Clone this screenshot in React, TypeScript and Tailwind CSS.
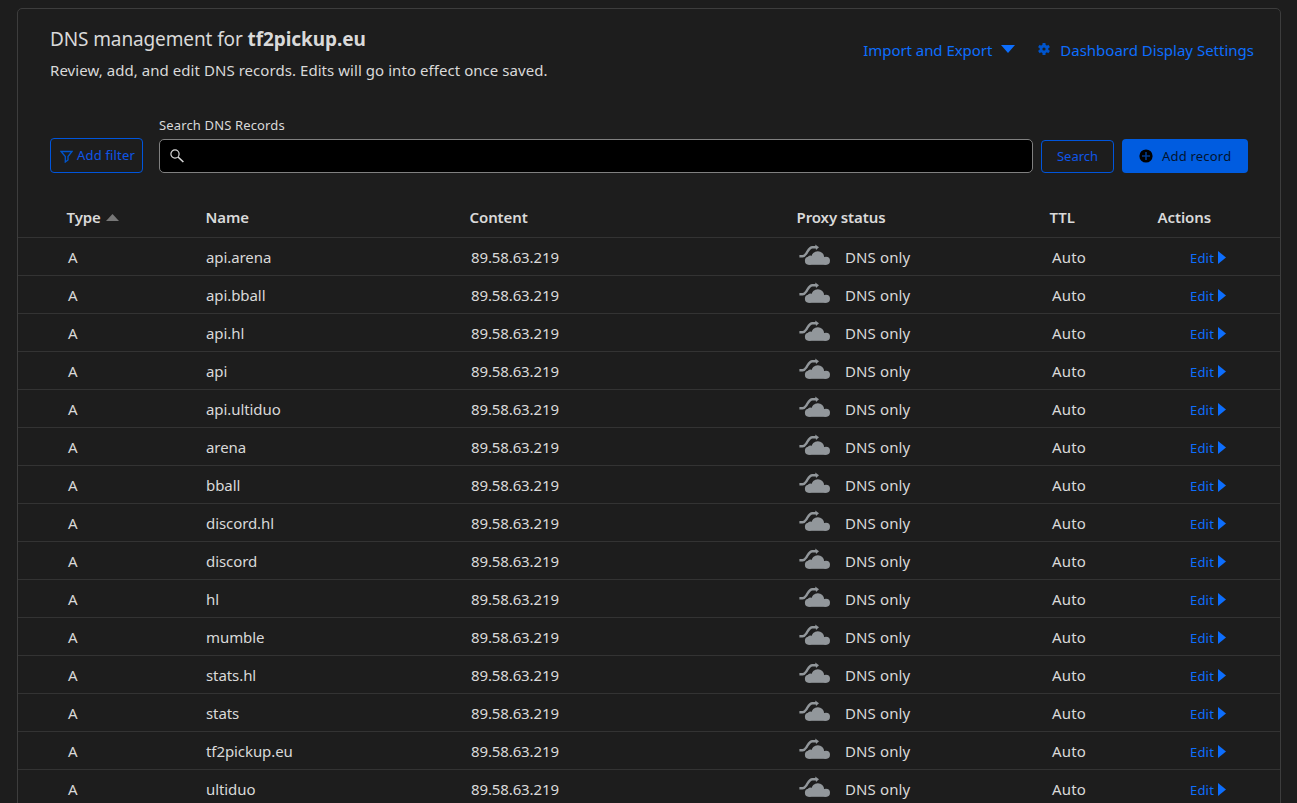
const records: string[] = [
  'api.arena',
  'api.bball',
  'api.hl',
  'api',
  'api.ultiduo',
  'arena',
  'bball',
  'discord.hl',
  'discord',
  'hl',
  'mumble',
  'stats.hl',
  'stats',
  'tf2pickup.eu',
  'ultiduo',
];

function GearIcon() {
  return (
    <svg width="12" height="12" viewBox="0 0 12 12" className="shrink-0">
      <g fill="#0055cc">
        {[0, 60, 120].map((a) => (
          <rect key={a} x="4.5" y="0" width="3" height="12" rx="0.5" transform={`rotate(${a} 6 6)`} />
        ))}
        <circle cx="6" cy="6" r="4.4" />
      </g>
      <circle cx="6" cy="6" r="1.6" fill="#1d1d1d" />
    </svg>
  );
}

function CloudIcon() {
  return (
    <svg width="32" height="22" viewBox="0 0 32 22" className="shrink-0">
      <g fill="#92979b">
        <circle cx="9.9" cy="16.8" r="4" />
        <circle cx="11.4" cy="14" r="2.6" />
        <circle cx="18.8" cy="13.6" r="6.4" />
        <circle cx="27" cy="16.8" r="4" />
        <rect x="9.5" y="14.5" width="18" height="6.3" />
      </g>
      <path
        d="M0.4 12.2H3.6C5.6 12.2 6.4 10.8 7.6 9C9.4 6.2 10.6 3.4 13.4 3.3H17.6"
        fill="none"
        stroke="#92979b"
        strokeWidth="2.4"
      />
      <path d="M16.2 0.6L20 3.2L17 6Z" fill="#92979b" />
    </svg>
  );
}

export default function App() {
  return (
    <div className="h-[803px] overflow-hidden bg-[#1d1d1d] pt-2 pl-[17px] font-['Noto_Sans',sans-serif] text-[15px] text-[#d9d9d9]">
      <main className="h-[900px] w-[1264px] rounded-[5px] border border-[#3d3d3d]">
        <header className="flex h-[101px] justify-between pt-[17px] pr-[26px] pl-8">
          <div>
            <h1 className="text-[19px] leading-[26px] tracking-[-0.12px] whitespace-nowrap">
              DNS management for <strong className="font-bold tracking-[-0.06px]">tf2pickup.eu</strong>
            </h1>
            <p className="mt-[7px] leading-[22px] tracking-[0.055px] whitespace-nowrap">
              Review, add, and edit DNS records. Edits will go into effect once saved.
            </p>
          </div>
          <nav className="flex h-12 items-center text-[#0d6efd]">
            <a className="flex items-center">
              <span className="tracking-[-0.05px] whitespace-nowrap">Import and Export</span>
              <svg width="14" height="8" viewBox="0 0 14 8" className="mb-[2px] ml-[9px]">
                <path d="M0 0H14L7 8Z" fill="currentColor" />
              </svg>
            </a>
            <a className="ml-[23px] flex items-center gap-[10px]">
              <span className="mb-[2px]"><GearIcon /></span>
              <span className="whitespace-nowrap">Dashboard Display Settings</span>
            </a>
          </nav>
        </header>

        <section className="flex h-[63px] items-end pl-8 text-[13px]">
          <button className="flex h-[35px] w-[93px] shrink-0 items-center gap-[4px] rounded-[4px] border border-[#0055dc] pl-[9px] text-[#0f56e8]">
            <svg width="13" height="13" viewBox="0 0 13 13" className="mt-[2px] shrink-0">
              <path d="M1 1.5H12L8 6.5V10L5.3 12V6.5Z" fill="none" stroke="#0055cc" strokeWidth="1.3" />
            </svg>
            <span className="tracking-[0.18px] whitespace-nowrap">Add filter</span>
          </button>
          <div className="ml-4 flex w-[874px] shrink-0 flex-col">
            <label className="mb-1 leading-[20px] tracking-[0.14px] whitespace-nowrap">Search DNS Records</label>
            <div className="flex h-[34px] items-center rounded-[5px] border border-[#808080] bg-black pl-[10px]">
              <svg width="15" height="15" viewBox="0 0 15 15" fill="none" stroke="#d9d9d9" strokeWidth="1.2">
                <circle cx="5" cy="5" r="4.1" />
                <path d="M8 8L13.4 13" strokeWidth="1.6" />
              </svg>
            </div>
          </div>
          <button className="ml-2 flex h-[33px] w-[73px] shrink-0 items-center justify-center rounded-[4px] border border-[#0055dc] text-[#0f56e8]">
            <span>Search</span>
          </button>
          <button className="ml-2 flex h-[34px] w-[126px] shrink-0 items-center gap-[9px] rounded-[4px] bg-[#005ce0] pl-[17px] text-[#03142f]">
            <svg width="14" height="14" viewBox="0 0 14 14" className="shrink-0">
              <circle cx="7" cy="7" r="6.6" fill="#000000" />
              <path d="M7 3V11M3 7H11" stroke="#003a8c" strokeWidth="1.6" />
            </svg>
            <span className="pt-px tracking-[0.2px] whitespace-nowrap">Add record</span>
          </button>
        </section>

        <section>
          <div className="grid h-[65px] grid-cols-[139px_264px_327px_253px_108px_1fr] items-start border-b border-[#333333] pt-[33px] pl-[48.5px] leading-[22px] font-semibold tracking-[-0.1px]">
            <div className="flex items-center gap-[5px]">
              <span>Type</span>
              <svg width="13" height="7" viewBox="0 0 13 7" className="mt-[1px]">
                <path d="M6.5 0L13 7H0Z" fill="#777777" />
              </svg>
            </div>
            <div>Name</div>
            <div>Content</div>
            <div>Proxy status</div>
            <div>TTL</div>
            <div>Actions</div>
          </div>
          {records.map((name) => (
            <div
              key={name}
              className="grid h-[38px] grid-cols-[138px_265px_328px_253px_138px_1fr] items-center border-b border-[#333333] pt-[1px] pl-[50px] leading-[22px]"
            >
              <div>A</div>
              <div className="tracking-[-0.08px]">{name}</div>
              <div className="tracking-[-0.12px]">89.58.63.219</div>
              <div className="flex items-center gap-[14px]">
                <span className="flex h-[26px] items-start"><CloudIcon /></span>
                <span className="tracking-[0.12px]">DNS only</span>
              </div>
              <div className="tracking-[0.2px]">Auto</div>
              <div className="flex items-center gap-1 pt-px text-[13px] text-[#0d6efd]">
                <span className="tracking-[0.2px]">Edit</span>
                <svg width="8" height="13" viewBox="0 0 8 13">
                  <path d="M0 0L8 6.5L0 13Z" fill="currentColor" />
                </svg>
              </div>
            </div>
          ))}
        </section>
      </main>
    </div>
  );
}
